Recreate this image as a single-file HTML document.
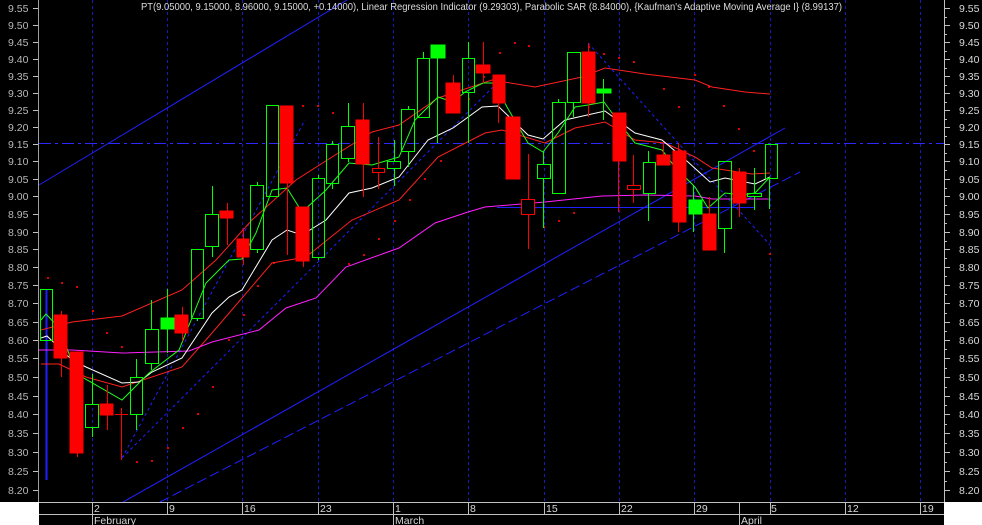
<!DOCTYPE html>
<html><head><meta charset="utf-8"><style>
html,body{margin:0;padding:0;background:#fff;}
svg{display:block;}
text{font-family:"Liberation Sans",sans-serif;}
</style></head><body>
<svg width="982" height="525" viewBox="0 0 982 525" xmlns="http://www.w3.org/2000/svg">
<rect x="0" y="0" width="982" height="525" fill="#fff"/>
<rect x="0" y="0" width="982" height="502" fill="#000"/>
<rect x="39" y="502" width="905" height="23" fill="#000"/>
<!-- vertical grid -->
<g stroke="#1a1ab8" stroke-width="1" stroke-dasharray="3,3">
<line x1="92.5" y1="0" x2="92.5" y2="502"/><line x1="167.5" y1="0" x2="167.5" y2="502"/>
<line x1="242.5" y1="0" x2="242.5" y2="502"/><line x1="318.5" y1="0" x2="318.5" y2="502"/>
<line x1="393.5" y1="0" x2="393.5" y2="502"/><line x1="468.5" y1="0" x2="468.5" y2="502"/>
<line x1="544.5" y1="0" x2="544.5" y2="502"/><line x1="619.5" y1="0" x2="619.5" y2="502"/>
<line x1="694.5" y1="0" x2="694.5" y2="502"/><line x1="770.5" y1="0" x2="770.5" y2="502"/>
<line x1="845.5" y1="0" x2="845.5" y2="502"/><line x1="920.5" y1="0" x2="920.5" y2="502"/>
</g>
<line x1="39" y1="143.5" x2="944" y2="143.5" stroke="#2a2aff" stroke-dasharray="12,4,3,4"/>
<!-- trend lines -->
<g stroke="#2020ff" stroke-width="1" fill="none">
<line x1="39" y1="185" x2="347" y2="0"/>
<line x1="123" y1="502" x2="785" y2="128"/>
<line x1="160" y1="502" x2="800" y2="172" stroke-dasharray="10,4"/>
<line x1="122" y1="458" x2="305" y2="120" stroke-dasharray="3,3"/>
<line x1="122" y1="458" x2="500" y2="80" stroke-dasharray="3,3"/>
<line x1="588" y1="43" x2="770" y2="245" stroke-dasharray="3,3"/>
<line x1="497" y1="207.5" x2="755" y2="207.5"/>
<line x1="46.5" y1="289" x2="46.5" y2="480" stroke-width="2"/>
</g>
<!-- SAR dots -->
<g fill="#e00000">
<rect x="47" y="277" width="2" height="2"/><rect x="61" y="282" width="2" height="2"/><rect x="76" y="286" width="2" height="2"/>
<rect x="92" y="310" width="2" height="2"/><rect x="106" y="332" width="2" height="2"/><rect x="121" y="346" width="2" height="2"/>
<rect x="136" y="461" width="2" height="2"/><rect x="151" y="460" width="2" height="2"/><rect x="167" y="447" width="2" height="2"/>
<rect x="182" y="427" width="2" height="2"/><rect x="197" y="413" width="2" height="2"/><rect x="212" y="386" width="2" height="2"/>
<rect x="228" y="339" width="2" height="2"/><rect x="243" y="314" width="2" height="2"/><rect x="257" y="285" width="2" height="2"/>
<rect x="273" y="262" width="2" height="2"/><rect x="302" y="105" width="2" height="2"/><rect x="317" y="105" width="2" height="2"/>
<rect x="332" y="112" width="2" height="2"/><rect x="348" y="263" width="2" height="2"/><rect x="363" y="254" width="2" height="2"/>
<rect x="378" y="238" width="2" height="2"/><rect x="394" y="220" width="2" height="2"/><rect x="409" y="199" width="2" height="2"/>
<rect x="424" y="178" width="2" height="2"/><rect x="440" y="160" width="2" height="2"/><rect x="468" y="98" width="2" height="2"/>
<rect x="483" y="76" width="2" height="2"/><rect x="499" y="52" width="2" height="2"/><rect x="514" y="42" width="2" height="2"/>
<rect x="528" y="45" width="2" height="2"/><rect x="543" y="226" width="2" height="2"/><rect x="558" y="220" width="2" height="2"/>
<rect x="573" y="212" width="2" height="2"/><rect x="588" y="46" width="2" height="2"/><rect x="603" y="53" width="2" height="2"/>
<rect x="618" y="57" width="2" height="2"/><rect x="633" y="61" width="2" height="2"/><rect x="663" y="88" width="2" height="2"/>
<rect x="678" y="106" width="2" height="2"/><rect x="694" y="74" width="2" height="2"/><rect x="708" y="86" width="2" height="2"/>
<rect x="723" y="105" width="2" height="2"/><rect x="738" y="128" width="2" height="2"/><rect x="753" y="150" width="2" height="2"/>
<rect x="769" y="253" width="2" height="2"/>
</g>
<!-- bands -->
<g fill="none" stroke-width="1">
<polyline stroke="#ff2020" points="41,330 72,322 122,316 182,290 216,260 252,220 296,180 332,157 372,132 399,125 438,98 492,80 535,87 582,77 605,68 645,74 695,80 712,87 745,92 770,94"/>
<polyline stroke="#ff2020" points="41,364 59,364 86,377 122,387 182,367 212,333 272,263 306,257 352,220 399,200 438,157 485,133 502,130 545,143 575,128 605,122 635,140 665,143 695,157 712,168 752,174 770,173"/>
<polyline stroke="#ff20ff" points="39,350 72,350 122,353 189,351 212,342 259,330 286,308 316,298 346,267 399,248 435,223 468,212 485,207 545,202 602,196 645,195 695,196 712,199 770,199"/>
<polyline stroke="#ffffff" points="41,338 47,336 72,360 86,367 122,383 139,382 152,372 182,358 212,313 229,297 242,290 272,240 287,230 302,235 326,220 349,193 372,188 399,177 428,140 453,128 482,107 498,106 528,135 543,139 565,120 605,111 635,133 662,140 688,162 710,182 725,178 755,184 770,177"/>
<polyline stroke="#20ff20" points="41,320 46,314 61,330 72,363 82,377 122,400 139,383 149,373 179,350 206,283 229,260 242,259 256,233 272,190 287,188 302,212 326,190 349,163 372,165 399,157 415,120 438,97 453,102 465,92 483,83 495,83 507,107 528,143 543,152 558,133 575,107 588,105 604,102 615,117 635,143 662,150 675,167 695,187 708,208 725,193 742,195 755,193 770,177"/>
</g>
<!-- candles: red filled -->
<g stroke="#ff0000" fill="#ff0000">
<line x1="61.5" y1="311" x2="61.5" y2="377"/><rect x="54" y="315" width="13" height="43"/>
<line x1="77.5" y1="352" x2="77.5" y2="457"/><rect x="70" y="352" width="13" height="101"/>
<line x1="107.5" y1="385" x2="107.5" y2="430"/><rect x="100" y="404" width="13" height="11"/>
<line x1="121.5" y1="408" x2="121.5" y2="460"/><line x1="115" y1="414.5" x2="128" y2="414.5"/>
<line x1="182.5" y1="307" x2="182.5" y2="341"/><rect x="175" y="315" width="13" height="18"/>
<line x1="227.5" y1="203" x2="227.5" y2="245"/><rect x="220" y="211" width="13" height="7"/>
<line x1="243.5" y1="228" x2="243.5" y2="265"/><rect x="237" y="239" width="12" height="18"/>
<line x1="287.5" y1="106" x2="287.5" y2="255"/><rect x="280" y="106" width="13" height="77"/>
<line x1="303.5" y1="207" x2="303.5" y2="267"/><rect x="296" y="207" width="13" height="54"/>
<line x1="363.5" y1="103" x2="363.5" y2="197"/><rect x="356" y="120" width="13" height="44"/>
<line x1="453.5" y1="75" x2="453.5" y2="113"/><rect x="446" y="83" width="14" height="30"/>
<line x1="483.5" y1="42" x2="483.5" y2="83"/><rect x="476" y="65" width="14" height="8"/>
<line x1="498.5" y1="75" x2="498.5" y2="123"/><rect x="493" y="75" width="12" height="28"/>
<line x1="513.5" y1="117" x2="513.5" y2="179"/><rect x="506" y="117" width="14" height="62"/>
<line x1="588.5" y1="43" x2="588.5" y2="117"/><rect x="582" y="52" width="13" height="51"/>
<line x1="618.5" y1="113" x2="618.5" y2="212"/><rect x="613" y="113" width="13" height="48"/>
<line x1="663.5" y1="143" x2="663.5" y2="165"/><rect x="657" y="155" width="13" height="10"/>
<line x1="678.5" y1="143" x2="678.5" y2="232"/><rect x="673" y="151" width="13" height="71"/>
<line x1="709.5" y1="197" x2="709.5" y2="250"/><rect x="703" y="214" width="13" height="36"/>
<line x1="739.5" y1="168" x2="739.5" y2="217"/><rect x="733" y="172" width="13" height="31"/>
</g>
<!-- red hollow -->
<g stroke="#ff0000" fill="none">
<line x1="378.5" y1="137" x2="378.5" y2="189"/><rect x="372.5" y="168.5" width="12" height="4" fill="#000"/>
<line x1="528.5" y1="154" x2="528.5" y2="249"/><rect x="521.5" y="199.5" width="13" height="15" fill="#000"/>
<line x1="633.5" y1="155" x2="633.5" y2="203"/><rect x="627.5" y="185.5" width="13" height="4" fill="#000"/>
</g>
<!-- green filled -->
<g stroke="#00ff00" fill="#00ff00">
<line x1="167.5" y1="289" x2="167.5" y2="353"/><rect x="161" y="318" width="13" height="11"/>
<line x1="437.5" y1="45" x2="437.5" y2="143"/><rect x="431" y="45" width="14" height="13"/>
<line x1="603.5" y1="79" x2="603.5" y2="120"/><rect x="597" y="89" width="14" height="4"/>
<line x1="693.5" y1="186" x2="693.5" y2="232"/><rect x="689" y="200" width="13" height="14"/>
</g>
<!-- green hollow -->
<g stroke="#00ff00" fill="none">
<rect x="40.5" y="289.5" width="12" height="51"/>
<line x1="92.5" y1="374" x2="92.5" y2="404"/><line x1="92.5" y1="427" x2="92.5" y2="437"/><rect x="85.5" y="404.5" width="13" height="23"/>
<line x1="136.5" y1="359" x2="136.5" y2="377"/><line x1="136.5" y1="414" x2="136.5" y2="430"/><rect x="130.5" y="377.5" width="12" height="37"/>
<line x1="151.5" y1="300" x2="151.5" y2="329"/><line x1="151.5" y1="363" x2="151.5" y2="370"/><rect x="145.5" y="329.5" width="13" height="34"/>
<line x1="197.5" y1="318" x2="197.5" y2="321"/><rect x="191.5" y="249.5" width="12" height="69"/>
<line x1="212.5" y1="186" x2="212.5" y2="214"/><line x1="212.5" y1="246" x2="212.5" y2="257"/><rect x="205.5" y="214.5" width="13" height="32"/>
<line x1="257.5" y1="182" x2="257.5" y2="185"/><line x1="257.5" y1="249" x2="257.5" y2="253"/><rect x="250.5" y="185.5" width="13" height="64"/>
<rect x="266.5" y="105.5" width="12" height="91"/>
<line x1="318.5" y1="175" x2="318.5" y2="178"/><line x1="318.5" y1="257" x2="318.5" y2="260"/><rect x="312.5" y="178.5" width="12" height="79"/>
<line x1="332.5" y1="141" x2="332.5" y2="144"/><line x1="332.5" y1="183" x2="332.5" y2="189"/><rect x="326.5" y="144.5" width="12" height="39"/>
<line x1="348.5" y1="103" x2="348.5" y2="126"/><line x1="348.5" y1="158" x2="348.5" y2="162"/><rect x="341.5" y="126.5" width="13" height="32"/>
<line x1="394.5" y1="140" x2="394.5" y2="161"/><line x1="394.5" y1="168" x2="394.5" y2="186"/><rect x="387.5" y="161.5" width="13" height="7"/>
<line x1="408.5" y1="106" x2="408.5" y2="109"/><line x1="408.5" y1="151" x2="408.5" y2="167"/><rect x="401.5" y="109.5" width="13" height="42"/>
<line x1="423.5" y1="52" x2="423.5" y2="58"/><rect x="417.5" y="58.5" width="12" height="59"/>
<line x1="468.5" y1="42" x2="468.5" y2="58"/><line x1="468.5" y1="92" x2="468.5" y2="143"/><rect x="462.5" y="58.5" width="12" height="34"/>
<line x1="543.5" y1="152" x2="543.5" y2="164"/><line x1="543.5" y1="178" x2="543.5" y2="228"/><rect x="537.5" y="164.5" width="13" height="14"/>
<line x1="558.5" y1="99" x2="558.5" y2="102"/><rect x="552.5" y="102.5" width="13" height="91"/>
<line x1="573.5" y1="102" x2="573.5" y2="117"/><rect x="567.5" y="52.5" width="13" height="50"/>
<line x1="648.5" y1="151" x2="648.5" y2="162"/><line x1="648.5" y1="193" x2="648.5" y2="221"/><rect x="643.5" y="162.5" width="12" height="31"/>
<line x1="724.5" y1="228" x2="724.5" y2="253"/><rect x="718.5" y="161.5" width="13" height="67"/>
<line x1="754.5" y1="168" x2="754.5" y2="193"/><line x1="754.5" y1="196" x2="754.5" y2="210"/><rect x="747.5" y="193.5" width="14" height="3"/>
<line x1="769.5" y1="178" x2="769.5" y2="209"/><rect x="765.5" y="144.5" width="12" height="34"/>
</g>
<!-- title -->
<text x="141" y="10" font-size="10.5" fill="#dcdcdc" textLength="701" lengthAdjust="spacingAndGlyphs">PT(9.05000, 9.15000, 8.96000, 9.15000, +0.14000), Linear Regression Indicator (9.29303), Parabolic SAR (8.84000), {Kaufman's Adaptive Moving Average I} (8.99137)</text>
<!-- axes -->
<line x1="38.5" y1="0" x2="38.5" y2="502" stroke="#a0a0a0"/>
<line x1="944.5" y1="0" x2="944.5" y2="502" stroke="#c0c0c0"/>
<g font-size="10.5" fill="#b8b8b8">
<text x="8" y="12">9.55</text><text x="8" y="29">9.50</text><text x="8" y="46">9.45</text><text x="8" y="63">9.40</text>
<text x="8" y="80">9.35</text><text x="8" y="97">9.30</text><text x="8" y="114">9.25</text><text x="8" y="131">9.20</text>
<text x="8" y="148">9.15</text><text x="8" y="165">9.10</text><text x="8" y="183">9.05</text><text x="8" y="200">9.00</text>
<text x="8" y="218">8.95</text><text x="8" y="236">8.90</text><text x="8" y="253">8.85</text><text x="8" y="271">8.80</text>
<text x="8" y="289">8.75</text><text x="8" y="307">8.70</text><text x="8" y="326">8.65</text><text x="8" y="344">8.60</text>
<text x="8" y="362">8.55</text><text x="8" y="381">8.50</text><text x="8" y="400">8.45</text><text x="8" y="418">8.40</text>
<text x="8" y="437">8.35</text><text x="8" y="456">8.30</text><text x="8" y="475">8.25</text><text x="8" y="494">8.20</text>
</g>
<g font-size="10.5" fill="#d8d8d8">
<text x="959" y="12">9.55</text><text x="959" y="29">9.50</text><text x="959" y="46">9.45</text><text x="959" y="63">9.40</text>
<text x="959" y="80">9.35</text><text x="959" y="97">9.30</text><text x="959" y="114">9.25</text><text x="959" y="131">9.20</text>
<text x="959" y="148">9.15</text><text x="959" y="165">9.10</text><text x="959" y="183">9.05</text><text x="959" y="200">9.00</text>
<text x="959" y="218">8.95</text><text x="959" y="236">8.90</text><text x="959" y="253">8.85</text><text x="959" y="271">8.80</text>
<text x="959" y="289">8.75</text><text x="959" y="307">8.70</text><text x="959" y="326">8.65</text><text x="959" y="344">8.60</text>
<text x="959" y="362">8.55</text><text x="959" y="381">8.50</text><text x="959" y="400">8.45</text><text x="959" y="418">8.40</text>
<text x="959" y="437">8.35</text><text x="959" y="456">8.30</text><text x="959" y="475">8.25</text><text x="959" y="494">8.20</text>
</g>
<g stroke="#c0c0c0">
<path d="M944 8.5h6M944 25.5h6M944 42.5h6M944 59.5h6M944 76.5h6M944 93.5h6M944 110.5h6M944 127.5h6M944 144.5h6M944 161.5h6M944 179.5h6M944 196.5h6M944 214.5h6M944 232.5h6M944 249.5h6M944 267.5h6M944 285.5h6M944 303.5h6M944 322.5h6M944 340.5h6M944 358.5h6M944 377.5h6M944 396.5h6M944 414.5h6M944 433.5h6M944 452.5h6M944 471.5h6M944 490.5h6"/>
<path d="M944 17.5h3M944 34.5h3M944 51.5h3M944 68.5h3M944 85.5h3M944 102.5h3M944 119.5h3M944 136.5h3M944 153.5h3M944 170.5h3M944 188.5h3M944 205.5h3M944 223.5h3M944 241.5h3M944 258.5h3M944 276.5h3M944 294.5h3M944 313.5h3M944 331.5h3M944 349.5h3M944 368.5h3M944 387.5h3M944 405.5h3M944 424.5h3M944 443.5h3M944 462.5h3M944 481.5h3"/>
<path d="M33 8.5h5M33 25.5h5M33 42.5h5M33 59.5h5M33 76.5h5M33 93.5h5M33 110.5h5M33 127.5h5M33 144.5h5M33 161.5h5M33 179.5h5M33 196.5h5M33 214.5h5M33 232.5h5M33 249.5h5M33 267.5h5M33 285.5h5M33 303.5h5M33 322.5h5M33 340.5h5M33 358.5h5M33 377.5h5M33 396.5h5M33 414.5h5M33 433.5h5M33 452.5h5M33 471.5h5M33 490.5h5"/>
</g>
<!-- bottom date axis -->
<g stroke="#c0c0c0" fill="none">
<line x1="39" y1="502.5" x2="944" y2="502.5"/>
<line x1="39" y1="514.5" x2="944" y2="514.5"/>
<path d="M92.5 502v12M167.5 502v12M242.5 502v12M318.5 502v12M393.5 502v12M468.5 502v12M544.5 502v12M619.5 502v12M694.5 502v12M739.5 502v12M770.5 502v12M845.5 502v12M920.5 502v12"/>
<path d="M92.5 514v11M393.5 514v11M739.5 514v11"/>
</g>
<g font-size="10.5" fill="#d8d8d8">
<text x="94" y="512">2</text><text x="169" y="512">9</text><text x="244" y="512">16</text><text x="320" y="512">23</text>
<text x="395" y="512">1</text><text x="470" y="512">8</text><text x="546" y="512">15</text><text x="621" y="512">22</text>
<text x="696" y="512">29</text><text x="771" y="512">5</text><text x="847" y="512">12</text><text x="922" y="512">19</text>
<text x="94" y="524">February</text><text x="395" y="524">March</text><text x="741" y="524">April</text>
</g>
</svg>
</body></html>
